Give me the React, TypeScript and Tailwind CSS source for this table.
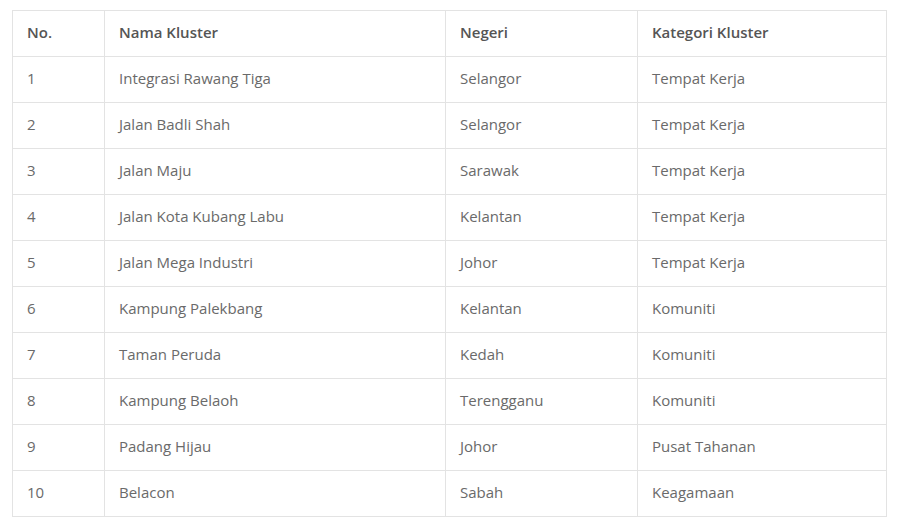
const rows = [
  ["1", "Integrasi Rawang Tiga", "Selangor", "Tempat Kerja"],
  ["2", "Jalan Badli Shah", "Selangor", "Tempat Kerja"],
  ["3", "Jalan Maju", "Sarawak", "Tempat Kerja"],
  ["4", "Jalan Kota Kubang Labu", "Kelantan", "Tempat Kerja"],
  ["5", "Jalan Mega Industri", "Johor", "Tempat Kerja"],
  ["6", "Kampung Palekbang", "Kelantan", "Komuniti"],
  ["7", "Taman Peruda", "Kedah", "Komuniti"],
  ["8", "Kampung Belaoh", "Terengganu", "Komuniti"],
  ["9", "Padang Hijau", "Johor", "Pusat Tahanan"],
  ["10", "Belacon", "Sabah", "Keagamaan"],
]

export default function App() {
  return (
    <div className="min-h-[530px] bg-white pl-[12px] pt-[10px] font-['Open_Sans',sans-serif]">
      <table className="w-[874px] table-fixed border-collapse text-[15px] text-[#6a6a6a]">
        <colgroup>
          <col className="w-[92px]" />
          <col className="w-[341px]" />
          <col className="w-[192px]" />
          <col className="w-[249px]" />
        </colgroup>
        <thead>
          <tr className="h-[46px]">
            {["No.", "Nama Kluster", "Negeri", "Kategori Kluster"].map((h) => (
              <th key={h} className="border border-[#e3e3e3] px-[14px] pb-[2px] text-left font-semibold text-[#555]">
                {h}
              </th>
            ))}
          </tr>
        </thead>
        <tbody>
          {rows.map((r) => (
            <tr key={r[0]} className="h-[46px]">
              {r.map((c, i) => (
                <td key={i} className="border border-[#e3e3e3] px-[14px] pb-[2px]">
                  {c}
                </td>
              ))}
            </tr>
          ))}
        </tbody>
      </table>
    </div>
  )
}
